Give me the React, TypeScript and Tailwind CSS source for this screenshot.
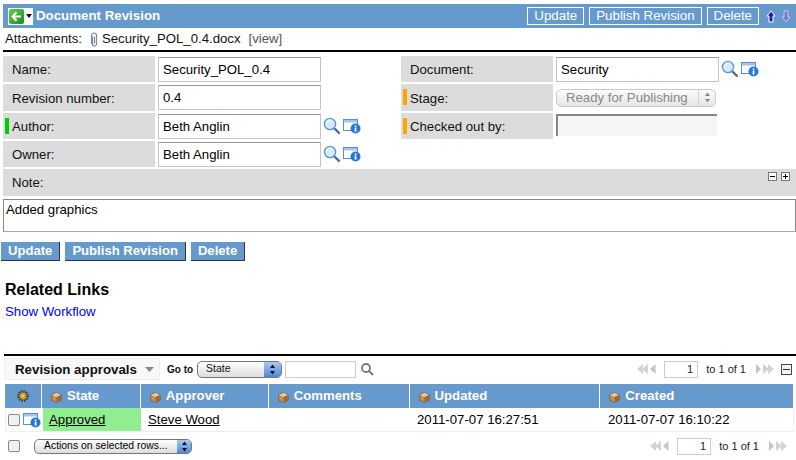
import React from 'react';

const SearchIcon: React.FC = () => (
    <svg width="18" height="18" viewBox="0 0 18 18" className="shrink-0">
        <path d="M10.5 10.5l5.5 5.5" stroke="#4a6a94" strokeWidth="2.4" strokeLinecap="round" />
        <circle cx="7" cy="7" r="5.6" fill="#d6eafb" stroke="#5b98d6" strokeWidth="1.4" />
        <path d="M3.6 6.5a3.6 3.6 0 0 1 3-3" stroke="#fff" strokeWidth="1.2" fill="none" />
    </svg>
);

const LookupIcon: React.FC = () => (
    <svg width="18" height="16" viewBox="0 0 18 16" className="shrink-0">
        <rect x="0.5" y="1.5" width="14" height="11" fill="#fff" stroke="#5a8fc9" />
        <rect x="1" y="2" width="13" height="2.5" fill="#a3c5ea" />
        <circle cx="12.5" cy="10.5" r="5" fill="#2a78d0" />
        <rect x="11.7" y="9.6" width="1.7" height="4" fill="#fff" />
        <rect x="11.7" y="7.4" width="1.7" height="1.5" fill="#fff" />
    </svg>
);

const CubeIcon: React.FC = () => (
    <svg width="11" height="11" viewBox="0 0 11 11" className="shrink-0">
        <path d="M5.5 0.5L10.3 2.8V8.2L5.5 10.5L0.7 8.2V2.8Z" fill="#c98f55" stroke="#6f4a25" strokeWidth="0.6" />
        <path d="M5.5 0.8L10 2.9L5.5 5L1 2.9Z" fill="#edc99c" />
        <path d="M5.5 5L10 2.9V8L5.5 10.2Z" fill="#9e6a38" />
    </svg>
);

const GearIcon: React.FC = () => (
    <svg width="12" height="12" viewBox="0 0 12 12">
        <circle cx="6" cy="6" r="4.6" fill="none" stroke="#3a2c08" strokeWidth="2.4" strokeDasharray="1.2 1.2" />
        <circle cx="6" cy="6" r="3.4" fill="#f2b91f" stroke="#6b4a06" strokeWidth="0.7" />
        <circle cx="6" cy="6" r="1.4" fill="#fff3c0" stroke="#6b4a06" strokeWidth="0.4" />
    </svg>
);

const PaperclipIcon: React.FC = () => (
    <svg width="10" height="15" viewBox="0 0 10 15" className="shrink-0">
        <path d="M3 4v7.5a2 2 0 0 0 4 0V3a2.5 2.5 0 0 0-5 0v8.5M5 4v7" transform="translate(0.5 0.5)" fill="none" stroke="#7d8a96" strokeWidth="1.2" />
    </svg>
);

const Pager: React.FC<{ collapse?: boolean }> = ({ collapse }) => (
    <div className="flex items-center">
        <svg width="20" height="12" viewBox="0 0 20 12">
            <path d="M7 1v10L1 6zM12 1v10L6 6z" fill="#d3d3d3" />
            <path d="M19.5 1v10l-5.5-5z" fill="#c4c4c4" />
        </svg>
        <input readOnly value="1" className="w-[34px] h-[17px] ml-[8px] border border-[#cccccc] bg-white text-right pr-[4px] text-[11px] text-[#222222] outline-none" />
        <span className="ml-[8px] text-[11px] text-[#222222]">to 1 of 1</span>
        <svg width="20" height="12" viewBox="0 0 20 12" className="ml-[9px]">
            <path d="M1 1v10l5-5z" fill="#c4c4c4" />
            <path d="M8 1v10l6-5zM13 1v10l6-5z" fill="#d3d3d3" />
        </svg>
        {collapse && (
            <div className="ml-[6px] w-[11px] h-[11px] border border-[#444444] bg-[#f2f2f2] flex items-center justify-center">
                <div className="w-[7px] h-px bg-[#333333]" />
            </div>
        )}
    </div>
);

const Label: React.FC<{ text: string; mark?: string }> = ({ text, mark }) => (
    <div className="w-[152px] h-full bg-[#dcdcdc] flex items-center relative pl-[9px] pt-[2px] text-[#111111]">
        {mark && <div className={`absolute left-[2px] top-[5px] w-[4px] h-[16px] ${mark}`} />}
        {text}
    </div>
);

const TextField: React.FC<{ value: string }> = ({ value }) => (
    <input
        readOnly
        value={value}
        className="ml-[3px] w-[163px] h-[25px] border border-[#c4c4c4] border-t-[#999999] bg-white pl-[4px] text-[13.2px] text-black outline-none"
    />
);

const Lookup: React.FC = () => (
    <div className="ml-[2px] flex items-center gap-[2px]">
        <SearchIcon />
        <LookupIcon />
    </div>
);

const Spinner: React.FC<{ color: string }> = ({ color }) => (
    <svg width="7" height="11" viewBox="0 0 7 11">
        <path d="M3.5 0.5L6 4H1zM3.5 10.5L1 7H6z" fill={color} />
    </svg>
);

const FormButton: React.FC<{ label: string }> = ({ label }) => (
    <button className="h-[19px] px-[7px] bg-[#6699cc] border-r border-b border-[#333333] text-white font-bold text-[13.1px] leading-none">
        {label}
    </button>
);

const HeaderButton: React.FC<{ label: string }> = ({ label }) => (
    <button className="h-[18px] px-[6px] border border-white text-white text-[13.3px] leading-none">{label}</button>
);

const Column: React.FC<{ label: string; width: string }> = ({ label, width }) => (
    <div className={`${width} h-full bg-[#6699cc] flex items-center pl-[9px] gap-[5px] text-white font-bold text-[13.2px] mr-px`}>
        <div className="mt-[2px]"><CubeIcon /></div>
        {label}
    </div>
);

const NoteToggle: React.FC<{ sign: string }> = ({ sign }) => (
    <div className="relative w-[9px] h-[9px] border border-[#777777] bg-white">
        <div className="absolute left-[1px] top-[3px] w-[5px] h-px bg-black" />
        {sign === 'plus' && <div className="absolute left-[3px] top-[1px] w-px h-[5px] bg-black" />}
    </div>
);

export default function App() {
    return (
        <div className="w-[796px] h-[460px] overflow-hidden bg-white pt-[4px] pl-[3px] text-[13.2px] text-black font-['Liberation_Sans',Arial,sans-serif]">
            <div className="h-[24px] bg-[#6699cc] flex items-center pl-[5px]">
                <div className="w-[25px] h-[17px] bg-white flex items-center">
                    <div className="w-[15px] h-[15px] ml-px rounded-[2px] bg-gradient-to-br from-[#5fd04c] to-[#138f1e] flex items-center justify-center">
                        <svg width="11" height="11" viewBox="0 0 11 11">
                            <path d="M5.5 1.2L1.5 5.5l4 4.3M1.8 5.5H10" fill="none" stroke="#fff" strokeWidth="2" />
                        </svg>
                    </div>
                    <svg width="6" height="4" viewBox="0 0 6 4" className="ml-[2px]">
                        <path d="M0 0h6L3 4z" fill="#111" />
                    </svg>
                </div>
                <span className="ml-[3px] text-white font-bold text-[13.3px]">Document Revision</span>
                <div className="ml-auto flex items-center gap-[5px]">
                    <HeaderButton label="Update" />
                    <HeaderButton label="Publish Revision" />
                    <HeaderButton label="Delete" />
                    <svg width="10" height="13" viewBox="0 0 10 13" className="ml-[2px]">
                        <path d="M5 1L9 6H7V12H3V6H1Z" fill="#1a1ac8" stroke="#fff" strokeWidth="1" />
                    </svg>
                    <svg width="10" height="13" viewBox="0 0 10 13" className="mr-[5px]">
                        <path d="M5 12L9 7H7V1H3V7H1Z" fill="#7a7ad0" stroke="#c4c4ec" strokeWidth="1" />
                    </svg>
                </div>
            </div>

            <div className="h-[22px] flex items-center pl-[2px] text-[#111111]">
                <span>Attachments:</span>
                <span className="ml-[7px]"><PaperclipIcon /></span>
                <span className="ml-[3px]">Security_POL_0.4.docx</span>
                <span className="ml-[8px] text-[#555555]">[view]</span>
            </div>
            <div className="h-[2px] bg-black" />

            <div className="mt-[4px] flex flex-col gap-[2px]">
                <div className="h-[26px] flex items-center">
                    <div className="w-[398px] h-full flex items-center">
                        <Label text="Name:" />
                        <TextField value="Security_POL_0.4" />
                    </div>
                    <div className="flex-1 h-full flex items-center">
                        <Label text="Document:" />
                        <TextField value="Security" />
                        <Lookup />
                    </div>
                </div>
                <div className="h-[27px] flex items-center">
                    <div className="w-[398px] h-full flex items-center">
                        <Label text="Revision number:" />
                        <TextField value="0.4" />
                    </div>
                    <div className="flex-1 h-full flex items-center">
                        <Label text="Stage:" mark="bg-[#ffa500]" />
                        <div className="ml-[3px] w-[160px] h-[18px] rounded-[5px] border border-[#c9c9c9] bg-gradient-to-b from-[#fbfbfb] to-[#e6e6e6] flex items-center justify-between pl-[9px] text-[#888888]">
                            <span>Ready for Publishing</span>
                            <div className="w-[17px] h-full border-l border-[#d2d2d2] flex items-center justify-center">
                                <Spinner color="#888888" />
                            </div>
                        </div>
                    </div>
                </div>
                <div className="h-[26px] flex items-center">
                    <div className="w-[398px] h-full flex items-center">
                        <Label text="Author:" mark="bg-[#00cc00]" />
                        <TextField value="Beth Anglin" />
                        <Lookup />
                    </div>
                    <div className="flex-1 h-full flex items-center">
                        <Label text="Checked out by:" mark="bg-[#ffa500]" />
                        <div className="ml-[3px] mt-[-2px] w-[161px] h-[22px] bg-[#f5f5f5] border-t-2 border-l-2 border-[#888888]" />
                    </div>
                </div>
                <div className="h-[26px] flex items-center">
                    <div className="w-[398px] h-full flex items-center">
                        <Label text="Owner:" />
                        <TextField value="Beth Anglin" />
                        <Lookup />
                    </div>
                </div>
                <div className="h-[27px] bg-[#dcdcdc] flex pl-[9px] pt-[4px] relative text-[#111111]">
                    Note:
                    <div className="absolute right-[6px] top-[3px] flex gap-[4px]">
                        <NoteToggle sign="minus" />
                        <NoteToggle sign="plus" />
                    </div>
                </div>
            </div>

            <textarea
                readOnly
                value="Added graphics"
                className="block mt-[3px] w-[793px] h-[33px] border border-[#888888] border-b-[#aaaaaa] pl-[2px] pt-[2px] text-[13.2px] leading-[15px] text-black resize-none outline-none"
            />

            <div className="mt-[10px] -ml-[2px] flex gap-[5px]">
                <FormButton label="Update" />
                <FormButton label="Publish Revision" />
                <FormButton label="Delete" />
            </div>

            <h2 className="mt-[19px] ml-[2px] text-[16px] leading-[20px] font-bold">Related Links</h2>
            <a className="block mt-[4px] ml-[2px] text-[13.2px] leading-[16px] text-[#0000ee]">Show Workflow</a>

            <div className="mt-[34px] h-[2px] bg-black ml-px" />

            <div className="mt-[2px] h-[22px] flex items-center pl-px text-[#111111]">
                <div className="w-[156px] h-[22px] pt-px bg-[#f8f8f8] border border-[#eeeeee] flex items-center pl-[10px] font-bold text-[13.3px]">
                    Revision approvals
                    <svg width="9" height="5" viewBox="0 0 9 5" className="ml-[8px]">
                        <path d="M0 0h9L4.5 5z" fill="#888888" />
                    </svg>
                </div>
                <span className="ml-[7px] font-bold text-[10px]">Go to</span>
                <div className="ml-[4px] w-[85px] h-[17px] rounded-[5px] border border-[#777777] bg-gradient-to-b from-white to-[#dddddd] flex items-center justify-between pl-[8px] text-[10.5px] overflow-hidden">
                    <span>State</span>
                    <div className="w-[17px] h-full bg-gradient-to-b from-[#a9c9f2] to-[#4f86d4] flex items-center justify-center">
                        <Spinner color="#111111" />
                    </div>
                </div>
                <input readOnly className="ml-[3px] w-[71px] h-[17px] border border-[#cccccc] outline-none" />
                <svg width="14" height="14" viewBox="0 0 14 14" className="ml-[4px]">
                    <circle cx="6" cy="6" r="4" fill="none" stroke="#777777" strokeWidth="1.8" />
                    <path d="M9 9l4 4" stroke="#777777" strokeWidth="2" />
                </svg>
                <div className="ml-auto mr-[4px]"><Pager collapse /></div>
            </div>

            <div className="mt-[4px] ml-[2px] w-[789px] h-[24px] flex">
                <div className="w-[36px] h-full bg-[#6699cc] flex items-center justify-center mr-px"><GearIcon /></div>
                <Column label="State" width="w-[98px]" />
                <Column label="Approver" width="w-[127px]" />
                <Column label="Comments" width="w-[140px]" />
                <Column label="Updated" width="w-[190px]" />
                <Column label="Created" width="w-[193px]" />
            </div>
            <div className="ml-[2px] w-[789px] h-[24px] flex items-center border-b border-l border-r border-[#eeeeee]">
                <div className="w-[37px] flex items-center pl-[2px] gap-[3px]">
                    <input type="checkbox" readOnly className="appearance-none w-[12px] h-[12px] rounded-[2px] border border-[#888888] bg-[#f2f2f2]" />
                    <LookupIcon />
                </div>
                <div className="w-[98px] h-full bg-[#90ee90] flex items-center pl-[6px] pt-px underline text-black">Approved</div>
                <div className="w-[269px] pl-[7px] pt-px underline">Steve Wood</div>
                <div className="w-[192px] pl-[7px] pt-px">2011-07-07 16:27:51</div>
                <div className="pl-[6px] pt-px">2011-07-07 16:10:22</div>
            </div>
            <div className="h-[28px] flex items-center pl-[5px]">
                <input type="checkbox" readOnly className="appearance-none w-[12px] h-[12px] rounded-[2px] border border-[#888888] bg-[#f2f2f2]" />
                <div className="ml-[14px] w-[158px] h-[15px] rounded-[5px] border border-[#777777] bg-gradient-to-b from-white to-[#dddddd] flex items-center justify-between pl-[9px] text-[10.4px] overflow-hidden">
                    <span>Actions on selected rows...</span>
                    <div className="w-[14px] h-full bg-gradient-to-b from-[#a9c9f2] to-[#4f86d4] flex items-center justify-center">
                        <Spinner color="#111111" />
                    </div>
                </div>
                <div className="ml-auto mr-[8px]"><Pager /></div>
            </div>
        </div>
    );
}
